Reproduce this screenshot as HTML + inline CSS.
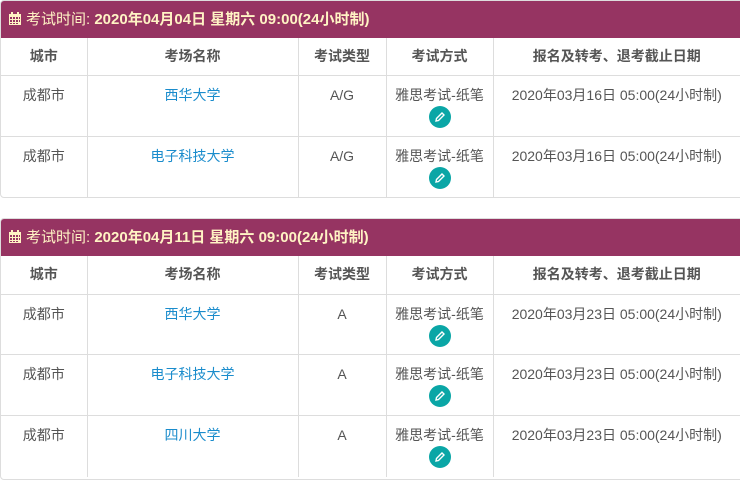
<!DOCTYPE html>
<html><head><meta charset="utf-8"><style>
body{margin:0;background:#fff;font-family:"Liberation Sans","Noto Sans CJK SC",sans-serif;font-size:14px;color:#555;width:740px;height:478px;overflow:hidden;position:relative}
.panel{position:absolute;left:0;width:760px;border:1px solid #ddd;border-radius:4px;overflow:hidden;box-sizing:border-box}
.hd{height:37px;background:#963462;color:#fff3c4;font-size:15px;line-height:37px;padding-left:8px;box-sizing:border-box;white-space:nowrap}
.hd b{font-weight:bold}
.cal{display:inline-block;vertical-align:middle;margin-right:5px;margin-top:-3px}
table{border-collapse:collapse;table-layout:fixed;width:740px}
td,th{border-right:1px solid #ddd;border-bottom:1px solid #ddd;text-align:center;vertical-align:top;padding:0}
tr:last-child td{border-bottom:none}
th{height:37px;line-height:37px;font-weight:bold;color:#555;font-size:14px}
td{height:60px;padding-top:11px;box-sizing:border-box;line-height:16px}
a{color:#1a8ccc;text-decoration:none}
.ed{display:block;width:22px;height:22px;border-radius:50%;background:#0aa6a6;margin:3px auto 0;position:relative}
.ed svg{position:absolute;left:5px;top:5px}
</style></head><body>
<div class="panel" style="top:0;height:198px">
<div class="hd"><svg class="cal" width="12" height="13" viewBox="0 0 12 13"><rect x="0" y="2" width="12" height="11" fill="#fff3c4"/><rect x="2" y="0" width="2" height="3" fill="#fff3c4"/><rect x="8" y="0" width="2" height="3" fill="#fff3c4"/><g fill="#963462"><rect x="1" y="5" width="2" height="2"/><rect x="4" y="5" width="2" height="2"/><rect x="7" y="5" width="2" height="2"/><rect x="1" y="8" width="2" height="2"/><rect x="4" y="8" width="2" height="2"/><rect x="7" y="8" width="2" height="2"/><rect x="1" y="11" width="2" height="1"/><rect x="4" y="11" width="2" height="1"/><rect x="7" y="11" width="2" height="1"/><rect x="10" y="5" width="1" height="2"/><rect x="10" y="8" width="1" height="2"/></g></svg>考试时间: <b>2020年04月04日 星期六 09:00(24小时制)</b></div>
<table><colgroup><col style="width:86px"><col style="width:211px"><col style="width:88px"><col style="width:107px"><col></colgroup>
<tr><th>城市</th><th>考场名称</th><th>考试类型</th><th>考试方式</th><th>报名及转考、退考截止日期</th></tr>
<tr><td style="height:61px">成都市</td><td><a>西华大学</a></td><td>A/G</td><td>雅思考试-纸笔<span class="ed"><svg width="12" height="12" viewBox="0 0 12 12"><path d="M2 10 L2.5 7.5 L8 2 L10 4 L4.5 9.5 Z" fill="none" stroke="#fff" stroke-width="1.4"/></svg></span></td><td>2020年03月16日 05:00(24小时制)</td></tr>
<tr><td style="height:61px">成都市</td><td><a>电子科技大学</a></td><td>A/G</td><td>雅思考试-纸笔<span class="ed"><svg width="12" height="12" viewBox="0 0 12 12"><path d="M2 10 L2.5 7.5 L8 2 L10 4 L4.5 9.5 Z" fill="none" stroke="#fff" stroke-width="1.4"/></svg></span></td><td>2020年03月16日 05:00(24小时制)</td></tr>
</table></div>
<div class="panel" style="top:218px;height:262px">
<div class="hd"><svg class="cal" width="12" height="13" viewBox="0 0 12 13"><rect x="0" y="2" width="12" height="11" fill="#fff3c4"/><rect x="2" y="0" width="2" height="3" fill="#fff3c4"/><rect x="8" y="0" width="2" height="3" fill="#fff3c4"/><g fill="#963462"><rect x="1" y="5" width="2" height="2"/><rect x="4" y="5" width="2" height="2"/><rect x="7" y="5" width="2" height="2"/><rect x="1" y="8" width="2" height="2"/><rect x="4" y="8" width="2" height="2"/><rect x="7" y="8" width="2" height="2"/><rect x="1" y="11" width="2" height="1"/><rect x="4" y="11" width="2" height="1"/><rect x="7" y="11" width="2" height="1"/><rect x="10" y="5" width="1" height="2"/><rect x="10" y="8" width="1" height="2"/></g></svg>考试时间: <b>2020年04月11日 星期六 09:00(24小时制)</b></div>
<table><colgroup><col style="width:86px"><col style="width:211px"><col style="width:88px"><col style="width:107px"><col></colgroup>
<tr><th style="height:38px">城市</th><th>考场名称</th><th>考试类型</th><th>考试方式</th><th>报名及转考、退考截止日期</th></tr>
<tr><td style="height:60px">成都市</td><td><a>西华大学</a></td><td>A</td><td>雅思考试-纸笔<span class="ed"><svg width="12" height="12" viewBox="0 0 12 12"><path d="M2 10 L2.5 7.5 L8 2 L10 4 L4.5 9.5 Z" fill="none" stroke="#fff" stroke-width="1.4"/></svg></span></td><td>2020年03月23日 05:00(24小时制)</td></tr>
<tr><td style="height:61px">成都市</td><td><a>电子科技大学</a></td><td>A</td><td>雅思考试-纸笔<span class="ed"><svg width="12" height="12" viewBox="0 0 12 12"><path d="M2 10 L2.5 7.5 L8 2 L10 4 L4.5 9.5 Z" fill="none" stroke="#fff" stroke-width="1.4"/></svg></span></td><td>2020年03月23日 05:00(24小时制)</td></tr>
<tr><td style="height:61px">成都市</td><td><a>四川大学</a></td><td>A</td><td>雅思考试-纸笔<span class="ed"><svg width="12" height="12" viewBox="0 0 12 12"><path d="M2 10 L2.5 7.5 L8 2 L10 4 L4.5 9.5 Z" fill="none" stroke="#fff" stroke-width="1.4"/></svg></span></td><td>2020年03月23日 05:00(24小时制)</td></tr>
</table></div>
</body></html>
